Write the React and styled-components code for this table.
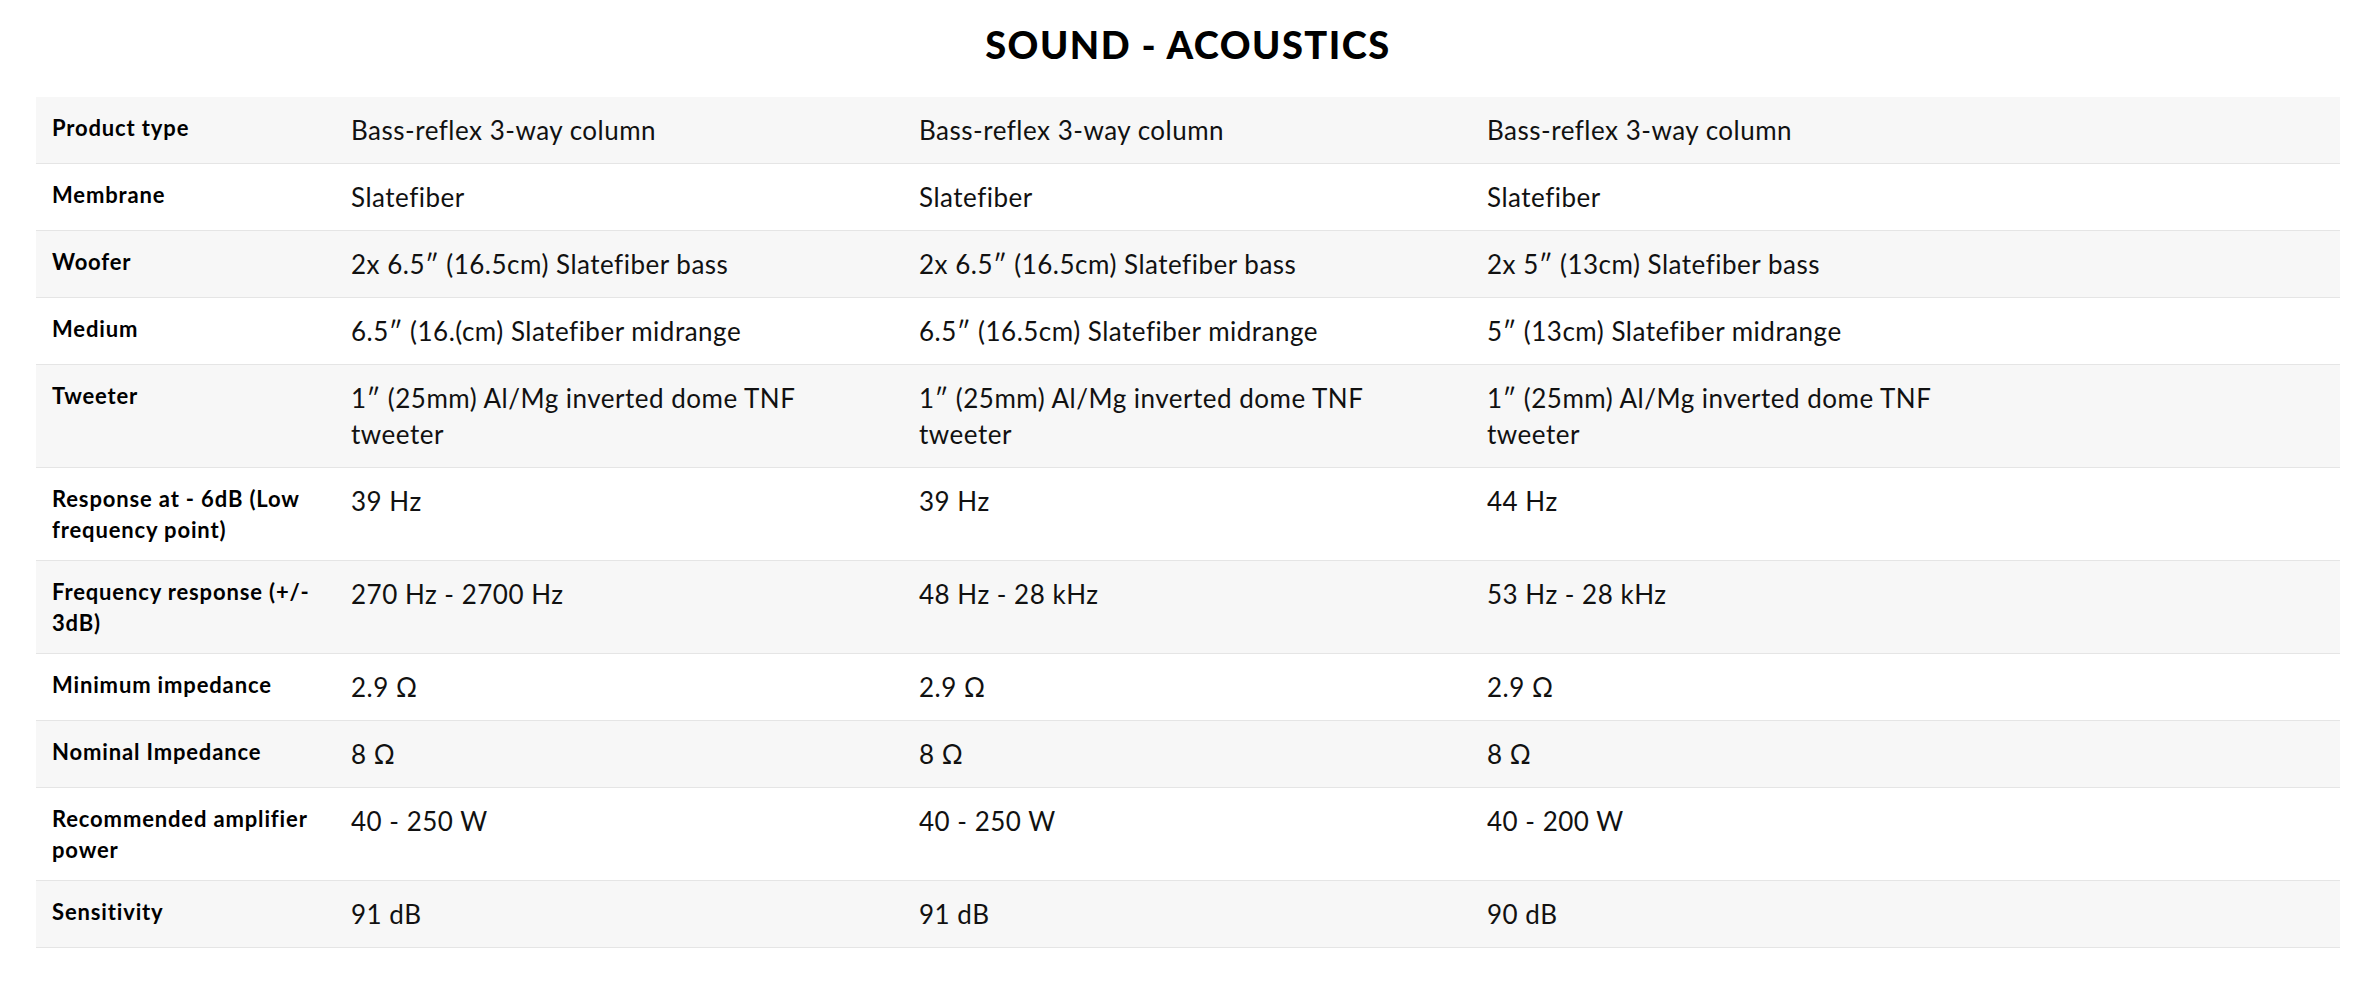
import styled, { createGlobalStyle } from 'styled-components';

const GlobalStyle = createGlobalStyle`
  html, body {
    margin: 0;
    padding: 0;
    background: #ffffff;
  }
  body {
    font-family: Lato, "Open Sans", "Liberation Sans", sans-serif;
    color: #111111;
  }
`;

const Section = styled.section`
  width: 100%;
  padding: 22px 40px 60px 36px;
  box-sizing: border-box;
`;

const Title = styled.h2`
  margin: 0 0 30px;
  text-align: center;
  font-size: 38px;
  line-height: 45px;
  font-weight: 900;
  letter-spacing: 1.5px;
  color: #000000;
`;

const Table = styled.div`
  display: flex;
  flex-direction: column;
`;

const Row = styled.div`
  display: grid;
  grid-template-columns: 300px repeat(3, 568px) 1fr;
  background: ${(p) => (p.$shaded ? '#f7f7f7' : '#ffffff')};
  border-bottom: 1px solid #e5e5e5;
`;

const Label = styled.div`
  padding: 15px 14px 15px 16px;
  font-size: 22px;
  line-height: 31px;
  font-weight: 700;
  letter-spacing: 0.85px;
  color: #000000;
`;

const Value = styled.div`
  padding: 15px 15px;
  font-size: 26px;
  line-height: 36px;
  font-weight: 400;
  letter-spacing: 0.5px;
  color: #111111;

  span {
    display: inline-block;
    max-width: 500px;
  }
`;

const rows = [
  ['Product type', 'Bass-reflex 3-way column', 'Bass-reflex 3-way column', 'Bass-reflex 3-way column'],
  ['Membrane', 'Slatefiber', 'Slatefiber', 'Slatefiber'],
  ['Woofer', '2x 6.5″ (16.5cm) Slatefiber bass', '2x 6.5″ (16.5cm) Slatefiber bass', '2x 5″ (13cm) Slatefiber bass'],
  ['Medium', '6.5″ (16.(cm) Slatefiber midrange', '6.5″ (16.5cm) Slatefiber midrange', '5″ (13cm) Slatefiber midrange'],
  [
    'Tweeter',
    '1″ (25mm) Al/Mg inverted dome TNF tweeter',
    '1″ (25mm) Al/Mg inverted dome TNF tweeter',
    '1″ (25mm) Al/Mg inverted dome TNF tweeter',
  ],
  ['Response at - 6dB (Low frequency point)', '39 Hz', '39 Hz', '44 Hz'],
  ['Frequency response (+/-\u200B3dB)', '270 Hz - 2700 Hz', '48 Hz - 28 kHz', '53 Hz - 28 kHz'],
  ['Minimum impedance', '2.9 Ω', '2.9 Ω', '2.9 Ω'],
  ['Nominal Impedance', '8 Ω', '8 Ω', '8 Ω'],
  ['Recommended amplifier power', '40 - 250 W', '40 - 250 W', '40 - 200 W'],
  ['Sensitivity', '91 dB', '91 dB', '90 dB'],
];

const App = () => {
  return (
    <>
      <GlobalStyle />
      <Section>
        <Title>SOUND - ACOUSTICS</Title>
        <Table>
          {rows.map(([label, ...values], i) => (
            <Row key={label} $shaded={i % 2 === 0}>
              <Label>{label}</Label>
              {values.map((v, j) => (
                <Value key={j}>
                  <span>{v}</span>
                </Value>
              ))}
              <div />
            </Row>
          ))}
        </Table>
      </Section>
    </>
  );
};

export default App;
